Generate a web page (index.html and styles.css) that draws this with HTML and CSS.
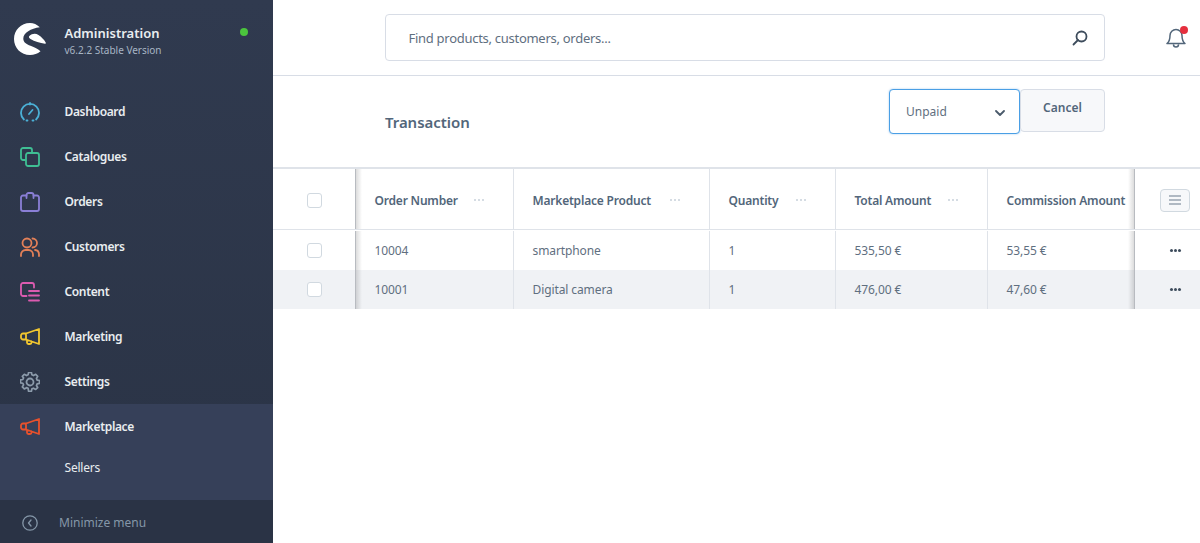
FILE: index.html
```html
<!DOCTYPE html>
<html lang="en">
<head>
<meta charset="utf-8">
<title>Transaction</title>
<link rel="stylesheet" href="styles.css">
</head>
<body>
<div class="app">
  <aside class="sidebar">
    <div class="brand">
      <svg class="logo" viewBox="0 0 32 32"><path fill="#fff" d="M25.800 4.200C23 1.500 19.500 0 16 0 7 0 0 7 0 16s7 16 16 16c4 0 7.500-1.300 10.500-3.800C24 25.500 19.500 23.800 16.500 22.700 12.500 21.300 9.300 19.500 9.300 15.500 9.300 9.500 17 5.500 25.800 4.200z"/><path fill="#fff" d="M15.300 13C18 10.500 21.500 10 24.500 12c3 2 5.500 4.500 7.200 7.500.3 1-.2 1.500-.7 1.300-5-.8-10.500-2.300-14.500-4.800-1.500-1-2-2-1.200-3z"/></svg>
      <div class="brand-text">
        <div class="brand-title">Administration</div>
        <div class="brand-version">v6.2.2 Stable Version</div>
      </div>
      <span class="status-dot"></span>
    </div>
    <nav class="nav">
      <a class="nav-item">
        <svg class="nav-icon ic-blue" viewBox="0 0 20 20"><path d="M3.900 17.500A9 9 0 1 1 16.100 17.500"/><path d="M6.500 18.500h1M12.500 18.500h1M9 12l3.500-4M10 1v1.500"/></svg>
        <span>Dashboard</span>
      </a>
      <a class="nav-item">
        <svg class="nav-icon ic-green" viewBox="0 0 20 20"><path d="M5 13H3a2 2 0 0 1-2-2V3a2 2 0 0 1 2-2h7a2 2 0 0 1 2 2v3"/><rect x="6" y="6" width="13" height="13" rx="2"/></svg>
        <span>Catalogues</span>
      </a>
      <a class="nav-item">
        <svg class="nav-icon ic-purple" viewBox="0 0 20 20"><path d="M6.500 3.500H3a2 2 0 0 0-2 2V17a2 2 0 0 0 2 2h14a2 2 0 0 0 2-2V5.500a2 2 0 0 0-2-2h-3.500"/><path d="M6.500 6V3a2 2 0 0 1 2-2h3a2 2 0 0 1 2 2v3"/></svg>
        <span>Orders</span>
      </a>
      <a class="nav-item">
        <svg class="nav-icon ic-orange" viewBox="0 0 20 20"><circle cx="7" cy="6" r="4.500"/><path d="M1 19v-1.500A4.500 4.500 0 0 1 5.500 13h3a4.500 4.500 0 0 1 4.500 4.500V19M12.500 1.500a4.500 4.500 0 0 1 0 9M15 13a4.500 4.500 0 0 1 4 4.500V19"/></svg>
        <span>Customers</span>
      </a>
      <a class="nav-item">
        <svg class="nav-icon ic-pink" viewBox="0 0 20 20"><path d="M6.500 14H3a2 2 0 0 1-2-2V3a2 2 0 0 1 2-2h9a2 2 0 0 1 2 2v2.500"/><path d="M9 9h10M9 13.500h10M9 18.500h10"/></svg>
        <span>Content</span>
      </a>
      <a class="nav-item">
        <svg class="nav-icon ic-yellow" viewBox="0 0 20 20"><path d="M6 6.500 19 2v15L6 12.500H3a2 2 0 0 1-2-2v-2a2 2 0 0 1 2-2zM6 6.500v6M7 13v2.500a1.500 1.500 0 0 0 1.500 1.500H10a1.500 1.500 0 0 0 1.500-1.500v-1"/></svg>
        <span>Marketing</span>
      </a>
      <a class="nav-item">
        <svg class="nav-icon ic-grey" viewBox="0 0 20 20"><circle cx="10" cy="10" r="3.500"/><path d="M8.500 1h3l.5 2.500 1.700.8L16 3l2.100 2.100-1.300 2.200.7 1.700 2.500.5v3l-2.500.5-.7 1.700 1.300 2.200-2.100 2-2.300-1.300-1.700.7-.5 2.500h-3L8 17.700l-1.700-.7L4 18.300l-2.100-2 1.300-2.200-.7-1.700L0 11.900v-3l2.500-.5.700-1.700L1.900 5 4 3l2.300 1.300L8 3.500z" transform="translate(.5 -.5) scale(.95)"/></svg>
        <span>Settings</span>
      </a>
      <div class="nav-group">
        <a class="nav-item">
          <svg class="nav-icon ic-red" viewBox="0 0 20 20"><path d="M6 6.500 19 2v15L6 12.500H3a2 2 0 0 1-2-2v-2a2 2 0 0 1 2-2zM6 6.500v6M7 13v2.500a1.500 1.500 0 0 0 1.500 1.500H10a1.500 1.500 0 0 0 1.500-1.500v-1"/></svg>
          <span>Marketplace</span>
        </a>
        <a class="nav-sub">Sellers</a>
      </div>
    </nav>
    <div class="minimize">
      <svg class="min-icon" viewBox="0 0 16 16"><circle cx="8" cy="8" r="7.200"/><path d="M9 5 6.500 8 9 11"/></svg>
      <span>Minimize menu</span>
    </div>
  </aside>
  <main class="main">
    <header class="topbar">
      <div class="search">
        <span class="search-text">Find products, customers, orders...</span>
        <svg class="search-icon" viewBox="0 0 16 16"><circle cx="9.500" cy="6.500" r="5"/><path d="M6 10 1.500 14.500"/></svg>
      </div>
      <div class="bell">
        <svg class="bell-icon" viewBox="0 0 20 20"><path d="M10 1.500a6 6 0 0 0-6 6c0 4-.5 6-3 8h18c-2.500-2-3-4-3-8a6 6 0 0 0-6-6zM7.500 16.500c0 1.500 1.100 2.500 2.500 2.500s2.500-1 2.500-2.500"/></svg>
        <span class="bell-dot"></span>
      </div>
    </header>
    <section class="smartbar">
      <h1 class="title">Transaction</h1>
      <div class="actions">
        <div class="select">
          <span>Unpaid</span>
          <svg class="chev" viewBox="0 0 10 6"><path d="M1 1l4 4 4-4"/></svg>
        </div>
        <button class="btn">Cancel</button>
      </div>
    </section>
    <section class="grid">
      <div class="row head">
        <div class="cell c-check sh-right"><span class="checkbox"></span></div>
        <div class="cell line">Order Number<i class="dots"></i></div>
        <div class="cell line">Marketplace Product<i class="dots"></i></div>
        <div class="cell line">Quantity<i class="dots"></i></div>
        <div class="cell line">Total Amount<i class="dots"></i></div>
        <div class="cell">Commission Amount</div>
        <div class="cell c-act sh-left"><span class="cols"><svg viewBox="0 0 12 10"><path d="M0 1h12M0 5h12M0 9h12"/></svg></span></div>
      </div>
      <div class="row">
        <div class="cell c-check sh-right"><span class="checkbox"></span></div>
        <div class="cell line">10004</div>
        <div class="cell line">smartphone</div>
        <div class="cell line">1</div>
        <div class="cell line">535,50 €</div>
        <div class="cell">53,55 €</div>
        <div class="cell c-act sh-left"><i class="more"></i></div>
      </div>
      <div class="row alt">
        <div class="cell c-check sh-right"><span class="checkbox"></span></div>
        <div class="cell line">10001</div>
        <div class="cell line">Digital camera</div>
        <div class="cell line">1</div>
        <div class="cell line">476,00 €</div>
        <div class="cell">47,60 €</div>
        <div class="cell c-act sh-left"><i class="more"></i></div>
      </div>
    </section>
  </main>
</div>
</body>
</html>
```
FILE: styles.css
```css
* { box-sizing: border-box; }
html, body { margin: 0; height: 100%; }
body { font-family: "Noto Sans", "Liberation Sans", sans-serif; color: #52667a; background: #fff; overflow: hidden; }
.app { display: flex; height: 543px; }

.sidebar { width: 273px; flex: none; display: flex; flex-direction: column; background: linear-gradient(180deg, #303a4f 0%, #2a3345 100%); color: #e9edf0; }
.brand { height: 89px; display: flex; align-items: flex-start; padding: 23px 0 0 14px; position: relative; }
.logo { width: 32px; height: 32px; flex: none; }
.brand-text { margin-left: 18.500px; margin-top: 1px; }
.brand-title { font-size: 13px; line-height: 18px; font-weight: 600; color: #e9edf0; }
.brand-version { font-size: 10px; line-height: 14px; color: #a7b5c4; margin-top: 1px; }
.status-dot { position: absolute; left: 240px; top: 28px; width: 8px; height: 8px; border-radius: 50%; background: #4bc53d; }

.nav { flex: 1; display: flex; flex-direction: column; }
.nav-item { height: 45px; display: flex; align-items: center; padding-left: 20px; font-size: 12px; font-weight: 600; letter-spacing: -.35px; color: #e9edf0; }
.nav-icon { width: 20px; height: 20px; flex: none; margin-right: 24.500px; fill: none; stroke: currentColor; stroke-width: 1.800; stroke-linecap: round; stroke-linejoin: round; }
.ic-blue { color: #4bb0d6; }
.ic-green { color: #3fbf94; }
.ic-purple { color: #8a7fd6; }
.ic-orange { color: #e38058; }
.ic-pink { color: #dc5bb0; }
.ic-yellow { color: #f2c72f; }
.ic-grey { color: #8c9bab; }
.ic-red { color: #e9512c; }
.nav-group { background: #364059; height: 96px; }
.nav-sub { display: block; padding: 10px 0 0 64.500px; font-size: 12px; line-height: 18px; letter-spacing: -.2px; color: #e9edf0; }

.minimize { height: 43px; display: flex; align-items: center; padding: 2px 0 0 22px; background: #2a3345; font-size: 12px; color: #8597a8; }
.min-icon { width: 16px; height: 16px; margin-right: 21px; fill: none; stroke: #8597a8; stroke-width: 1.300; stroke-linecap: round; stroke-linejoin: round; }

.main { flex: 1; min-width: 0; display: flex; flex-direction: column; }
.topbar { height: 76px; flex: none; display: flex; align-items: flex-start; padding: 14px 0 0 112px; border-bottom: 1px solid #d8dde6; }
.search { width: 720px; height: 47px; display: flex; align-items: center; justify-content: space-between; padding: 0 16px 0 22.500px; border: 1px solid #d8dde6; border-radius: 4px; font-size: 13px; letter-spacing: -.28px; }
.search-text { color: #5f6f7f; }
.search-icon { width: 16px; height: 16px; fill: none; stroke: #3d4c5c; stroke-width: 1.800; stroke-linecap: round; }
.bell { position: relative; width: 20px; height: 20px; margin: 14px 0 0 61px; }
.bell-icon { width: 20px; height: 20px; fill: none; stroke: #52667a; stroke-width: 1.500; stroke-linejoin: round; }
.bell-dot { position: absolute; right: -2px; top: -2px; width: 8px; height: 8px; border-radius: 50%; background: #e52f3e; }

.smartbar { height: 93px; flex: none; display: flex; align-items: flex-start; justify-content: space-between; padding: 13px 95px 0 112px; border-bottom: 2px solid #dfe3e9; }
.title { margin: 23px 0 0; font-size: 15px; line-height: 20px; font-weight: 600; letter-spacing: -.05px; color: #52667a; }
.actions { display: flex; }
.select { width: 131px; height: 45px; display: flex; align-items: center; justify-content: space-between; padding: 0 14px 0 16px; border: 1px solid #4a9fe5; border-radius: 4px; background: #fff; font-size: 12px; color: #5f6f7f; box-shadow: 0 0 2px rgba(61,147,224,.5); }
.chev { width: 10px; height: 6px; margin-top: 3px; fill: none; stroke: #4a5a6b; stroke-width: 1.800; stroke-linecap: round; stroke-linejoin: round; }
.btn { width: 85px; height: 43px; padding: 0 0 6px; border: 1px solid #d8dde6; border-radius: 4px; background: #f7f8fa; font: 600 12px "Noto Sans", sans-serif; color: #52667a; }

.row { display: grid; grid-template-columns: 83px 158px 196px 126px 152px 146px 66px; height: 39px; font-size: 12px; letter-spacing: -.1px; color: #5f6f7f; }
.row.head { height: 61px; border-bottom: 1px solid #dfe3e9; font-weight: 600; letter-spacing: -.2px; color: #52667a; margin-bottom: 1px; }
.row.head .cell { padding-top: 2px; }
.row.alt { background: #f0f2f5; }
.cell { display: flex; align-items: center; padding-left: 18.500px; position: relative; white-space: nowrap; }
.line { border-right: 1px solid #dfe3e9; }
.c-check { padding-left: 34px; }
.c-act { padding-left: 15px; justify-content: center; }
.sh-right { border-right: 1px solid #d8dce2; }
.sh-left { border-left: 1px solid #d8dce2; }
.sh-right::after { content: ""; position: absolute; left: 100%; top: 0; bottom: 0; width: 7px; background: linear-gradient(90deg, rgba(0,0,0,.16), rgba(0,0,0,0)); }
.sh-left::before { content: ""; position: absolute; right: 100%; top: 0; bottom: 0; width: 7px; background: linear-gradient(270deg, rgba(0,0,0,.16), rgba(0,0,0,0)); }
.checkbox { width: 15px; height: 15px; background: #fff; border: 1px solid #d1d9e0; border-radius: 3px; }
.dots { position: absolute; right: 37px; top: 50%; width: 2px; height: 2px; border-radius: 50%; background: #c7d0da; box-shadow: 4px 0 #c7d0da, 8px 0 #c7d0da; }
.cols { width: 30px; height: 23px; display: flex; align-items: center; justify-content: center; border: 1px solid #d1d9e0; border-radius: 4px; background: #f7f8fa; }
.cols svg { width: 12px; height: 10px; fill: none; stroke: #6a7b8c; stroke-width: 1.200; }
.more { width: 3px; height: 3px; border-radius: 50%; background: #3d4c5c; box-shadow: -4px 0 #3d4c5c, 4px 0 #3d4c5c; }
```
